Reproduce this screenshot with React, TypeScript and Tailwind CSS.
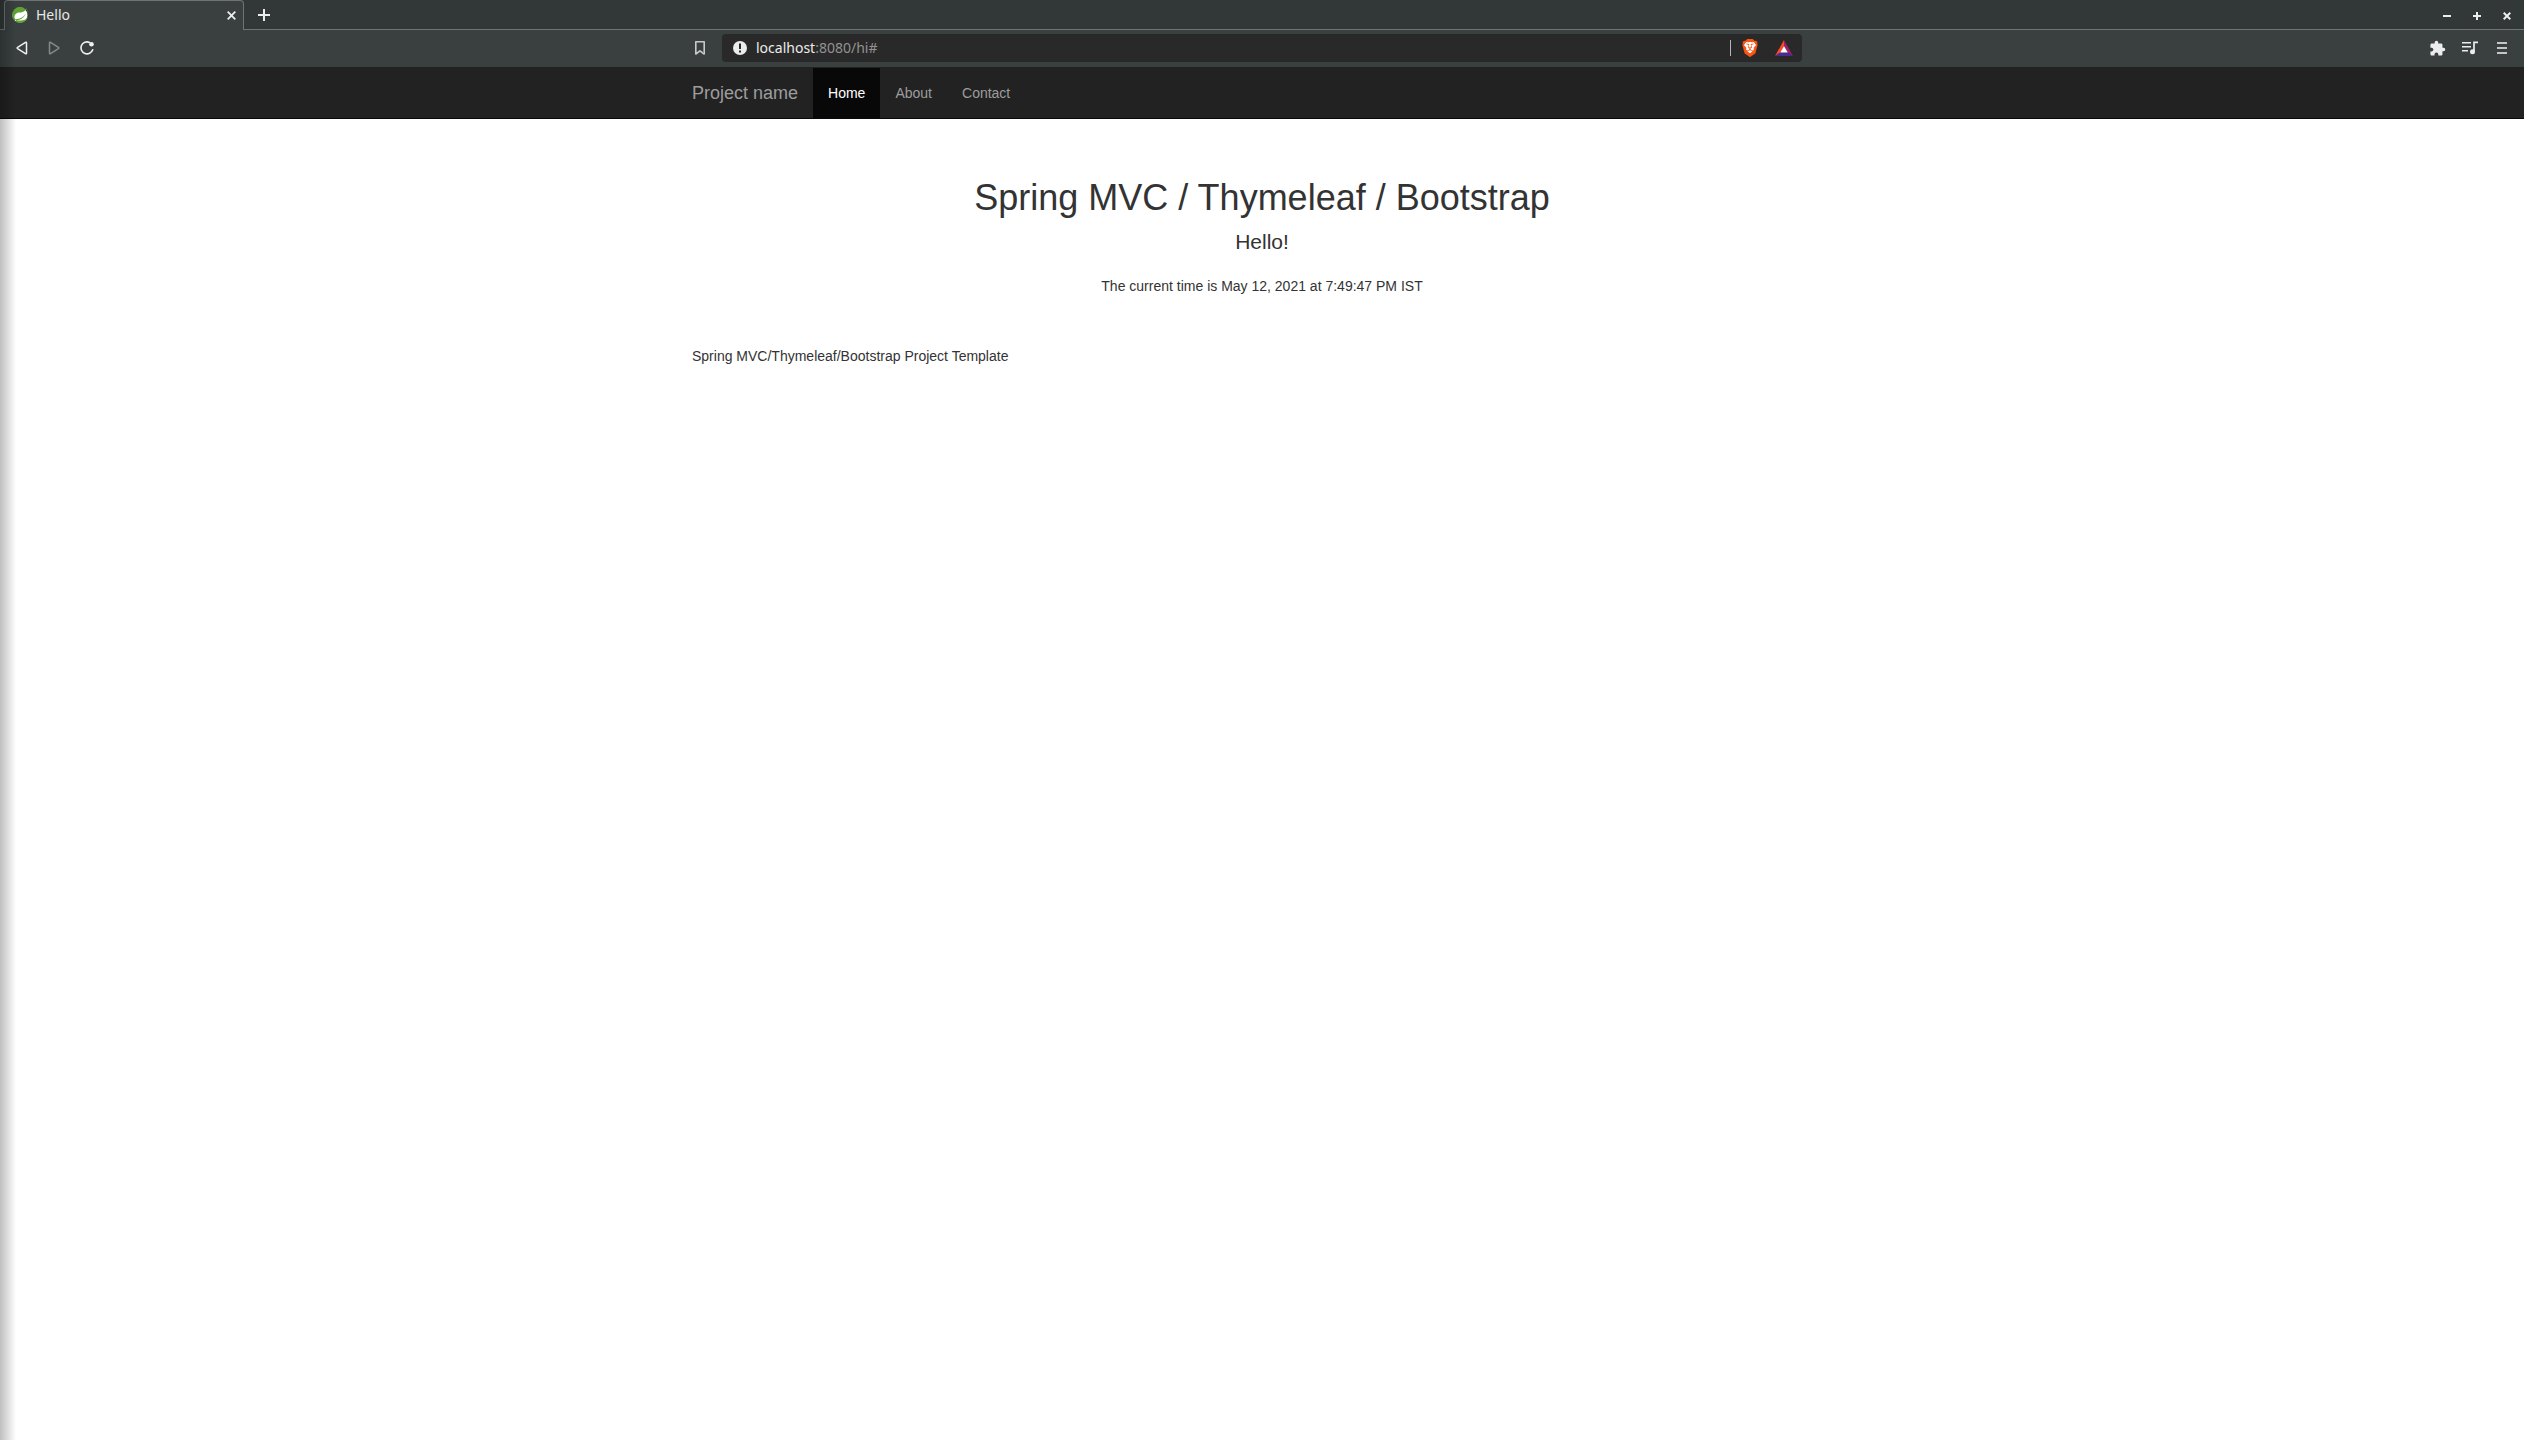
import React from "react";
import { SiBrave, SiSpring } from "react-icons/si";

const uiFont = "font-['Noto_Sans',sans-serif]";

function SpringIcon() {
  return (
    <svg width="16" height="16" viewBox="0 0 16 16" aria-hidden="true">
      <circle cx="8" cy="8" r="7.500" fill="#fff" />
      <SiSpring size={16} color="#5fa134" />
    </svg>
  );
}

function TriangleIcon({ flip = false, color }: { flip?: boolean; color: string }) {
  return (
    <svg width="12" height="14" viewBox="0 0 12 14" fill="none" stroke={color} strokeWidth="1.5" strokeLinejoin="round" aria-hidden="true">
      <path d={flip ? "M1.500 1.800v10.400q0 1 1 .4L10.400 7.600q.8-.6 0-1.200L2.500 1.400q-1-.6-1 .4z" : "M10.500 1.800v10.400q0 1-1 .4L1.600 7.600q-.8-.6 0-1.200L9.500 1.400q1-.6 1 .4z"} />
    </svg>
  );
}

function ReloadIcon() {
  return (
    <svg width="14" height="14" viewBox="0 0 14 14" aria-hidden="true">
      <path d="M9.500 1.400A6 6 0 1 0 12.700 8.800" fill="none" stroke="#f0f0f0" strokeWidth="1.6" strokeLinecap="round" />
      <circle cx="11.500" cy="3.300" r="2.300" fill="#f0f0f0" />
    </svg>
  );
}

function BookmarkIcon() {
  return (
    <svg width="10" height="14" viewBox="0 0 10 14" fill="none" stroke="#c8cac9" strokeWidth="1.6" strokeLinejoin="round" aria-hidden="true">
      <path d="M.8 .8h8.400v12.200L5 9.800.8 13z" />
    </svg>
  );
}

function InfoIcon() {
  return (
    <svg width="14" height="14" viewBox="0 0 14 14" aria-hidden="true">
      <circle cx="7" cy="7" r="7" fill="#ececec" />
      <path d="M6 2.500h2v5.500H6zM6 9.500h2v2H6z" fill="#292929" />
    </svg>
  );
}

function BraveIcon() {
  return (
    <svg width="16" height="18" viewBox="1 0 16 18" aria-hidden="true">
      <path d="M5 2.500h8l2.300 3.500L13.500 12 9 15 4.500 12 2.700 6z" fill="#fff" />
      <SiBrave size={18} color="#fb5412" />
    </svg>
  );
}

function BatIcon() {
  return (
    <svg width="18" height="16" viewBox="0 0 18 16" aria-hidden="true">
      <path d="M9 0L0 16l5.200-3.500L9 6z" fill="#ff4724" />
      <path d="M9 0l9 16-5.200-3.500L9 6z" fill="#9e1f63" />
      <path d="M0 16h18l-5.200-3.500H5.200z" fill="#4a2a96" />
      <path d="M9 6l3.800 6.500H5.200z" fill="#fff" />
    </svg>
  );
}

function PuzzleIcon() {
  return (
    <svg width="17" height="17" viewBox="0 0 24 24" fill="#ececec" aria-hidden="true">
      <path d="M20.500 11H19V7c0-1.100-.9-2-2-2h-4V3.500a2.500 2.500 0 0 0-5 0V5H4c-1.100 0-1.990.9-1.990 2v3.800H3.500c1.490 0 2.700 1.210 2.700 2.700s-1.210 2.700-2.700 2.700H2V20c0 1.100.9 2 2 2h3.800v-1.500c0-1.490 1.210-2.700 2.700-2.700s2.700 1.210 2.700 2.700V22H17c1.100 0 2-.9 2-2v-4h1.500a2.500 2.500 0 0 0 0-5z" />
    </svg>
  );
}

function PlaylistIcon() {
  return (
    <svg width="18" height="14" viewBox="0 0 18 14" aria-hidden="true">
      <path d="M1 1.800h9M1 5.800h9M1 9.800h6" stroke="#ececec" strokeWidth="1.600" />
      <path d="M13 10.500V1.300h4" stroke="#ececec" strokeWidth="1.700" fill="none" />
      <circle cx="11.500" cy="10.800" r="2.500" fill="#ececec" />
    </svg>
  );
}

function MenuIcon() {
  return (
    <svg width="10" height="12" viewBox="0 0 10 12" fill="#c4c6c5" aria-hidden="true">
      <path d="M0 0h10v2H0zM0 5h10v2H0zM0 10h10v2H0z" />
    </svg>
  );
}

function Glyph({ d, size, width = 2 }: { d: string; size: number; width?: number }) {
  return (
    <svg width={size} height={size} viewBox={`0 0 ${size} ${size}`} fill="none" stroke="#ececec" strokeWidth={width} aria-hidden="true">
      <path d={d} />
    </svg>
  );
}

function TabStrip() {
  return (
    <div className="flex h-[30px] bg-[#323838]">
      <div className="w-1 border-b border-[#6f7473]" />
      <div className="flex w-60 items-center rounded-t border border-b-0 border-[#6f7473] bg-[#3a4040] px-[7px] pb-px">
        <SpringIcon />
        <span className="ml-2 flex-1 text-sm leading-5 text-[#e6e8e7]">Hello</span>
        <button type="button" aria-label="Close tab">
          <Glyph size={9} d="M.7.7l7.600 7.600M8.300.7L.7 8.300" width={1.8} />
        </button>
      </div>
      <div className="flex flex-1 items-center justify-between border-b border-[#6f7473] pt-px pr-[13px] pl-[14px]">
        <button type="button" aria-label="New tab">
          <Glyph size={12} d="M6 0v12M0 6h12" />
        </button>
        <div className="flex items-center gap-[22px] pt-px">
          <button type="button" aria-label="Minimize">
            <Glyph size={8} d="M0 4h8" />
          </button>
          <button type="button" aria-label="Maximize">
            <Glyph size={8} d="M4 0v8M0 4h8" />
          </button>
          <button type="button" aria-label="Close">
            <Glyph size={8} d="M.7.7l6.600 6.600M7.300.7L.7 7.300" />
          </button>
        </div>
      </div>
    </div>
  );
}

function Toolbar() {
  return (
    <div className="grid h-[37px] grid-cols-[calc(50%-567px)_1107px_1fr] items-center bg-[#3a4040] pb-px">
      <div className="flex items-center gap-5 pl-4">
        <button type="button" aria-label="Back">
          <TriangleIcon color="#f0f0f0" />
        </button>
        <button type="button" aria-label="Forward">
          <TriangleIcon flip color="#858988" />
        </button>
        <button type="button" aria-label="Reload">
          <ReloadIcon />
        </button>
      </div>
      <div className="flex items-center">
        <button type="button" aria-label="Bookmark this page" className="mr-[17px]">
          <BookmarkIcon />
        </button>
        <div className="flex h-7 flex-1 items-center rounded bg-[#292929] pr-[9px] pl-[11px]">
          <InfoIcon />
          <span className="ml-[9px] flex-1 text-sm leading-5 text-[#929292]">
            <span className="text-[#ececec]">localhost</span>:8080/hi#
          </span>
          <span className="mr-[11px] h-4 w-px bg-[#b5b5b5]" />
          <button type="button" aria-label="Brave Shields" className="mr-[17px]">
            <BraveIcon />
          </button>
          <button type="button" aria-label="Brave Rewards">
            <BatIcon />
          </button>
        </div>
      </div>
      <div className="flex items-center justify-end gap-[15px] pr-[17px]">
        <button type="button" aria-label="Extensions">
          <PuzzleIcon />
        </button>
        <button type="button" aria-label="Media controls">
          <PlaylistIcon />
        </button>
        <button type="button" aria-label="Menu" className="ml-[3px]">
          <MenuIcon />
        </button>
      </div>
    </div>
  );
}

function Navbar() {
  return (
    <nav className="border-b border-[#080808] bg-[#222] pt-px">
      <div className="mx-auto flex h-[50px] max-w-[1170px] px-[15px] text-sm leading-5 text-[#9d9d9d]">
        <a href="#" className="py-[15px] pr-[15px] text-lg leading-5">
          Project name
        </a>
        <a href="#" className="bg-[#080808] p-[15px] text-white">
          Home
        </a>
        <a href="#about" className="p-[15px]">
          About
        </a>
        <a href="#contact" className="p-[15px]">
          Contact
        </a>
      </div>
    </nav>
  );
}

export default function App() {
  return (
    <div className="relative flex min-h-screen flex-col bg-white">
      <header className={uiFont}>
        <TabStrip />
        <Toolbar />
      </header>
      <div className="font-['Liberation_Sans',Arial,sans-serif] text-sm leading-5 text-[#333]">
        <Navbar />
        <main className="mx-auto max-w-[1170px] px-[15px]">
          <div className="px-[15px] pt-[39px] pb-10 text-center">
            <h1 className="mt-5 mb-[10px] text-4xl leading-10">Spring MVC / Thymeleaf / Bootstrap</h1>
            <p className="mb-5 text-[21px] leading-7">Hello!</p>
            <p className="mb-[10px]">The current time is May 12, 2021 at 7:49:47 PM IST</p>
          </div>
          <footer>Spring MVC/Thymeleaf/Bootstrap Project Template</footer>
        </main>
      </div>
      <div className="pointer-events-none absolute inset-y-0 left-0 w-4 bg-linear-to-r from-black/25 to-transparent" />
    </div>
  );
}
